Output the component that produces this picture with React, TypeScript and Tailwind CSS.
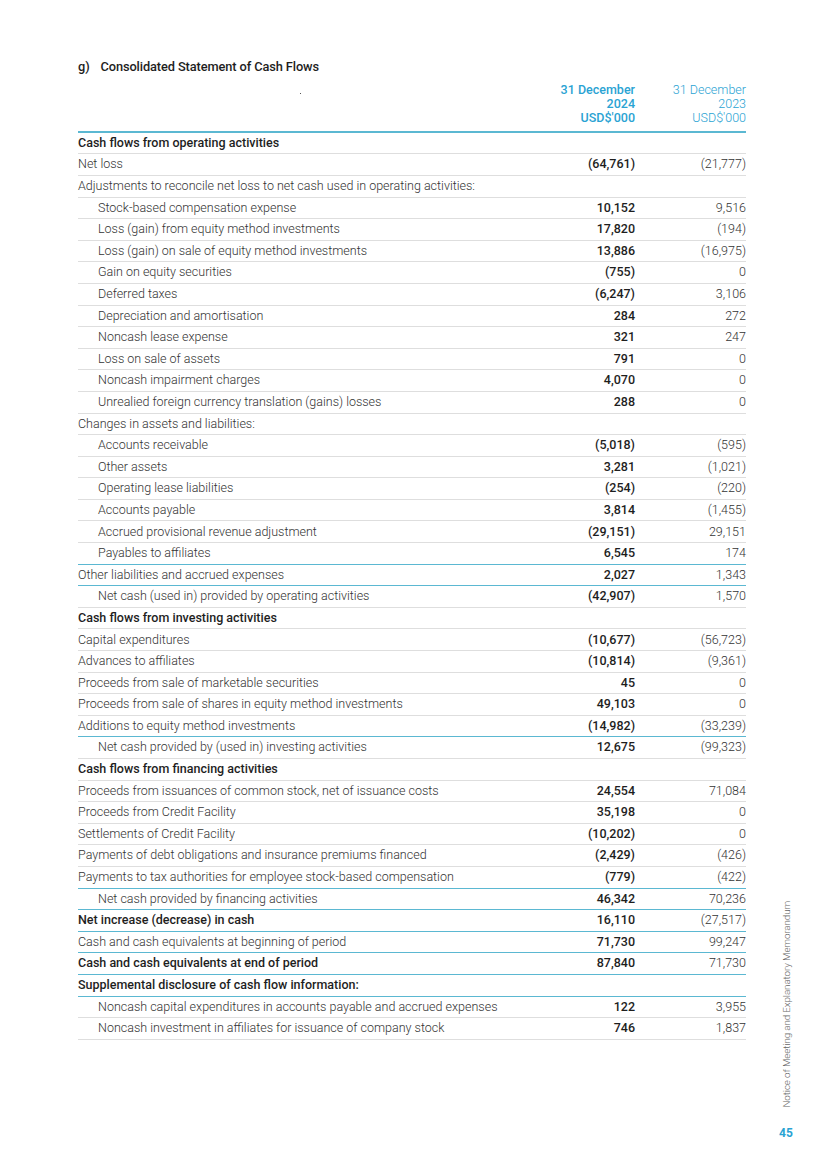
type Row = {
  label: string;
  a?: string;
  b?: string;
  kind?: "head" | "plain" | "indent" | "total";
  line?: "teal" | "gray";
};

const rows: Row[] = [
  { label: "Cash flows from operating activities", kind: "head" },
  { label: "Net loss", a: "(64,761)", b: "(21,777)" },
  { label: "Adjustments to reconcile net loss to net cash used in operating activities:" },
  { label: "Stock-based compensation expense", a: "10,152", b: "9,516", kind: "indent" },
  { label: "Loss (gain) from equity method investments", a: "17,820", b: "(194)", kind: "indent" },
  { label: "Loss (gain) on sale of equity method investments", a: "13,886", b: "(16,975)", kind: "indent" },
  { label: "Gain on equity securities", a: "(755)", b: "0", kind: "indent" },
  { label: "Deferred taxes", a: "(6,247)", b: "3,106", kind: "indent" },
  { label: "Depreciation and amortisation", a: "284", b: "272", kind: "indent" },
  { label: "Noncash lease expense", a: "321", b: "247", kind: "indent" },
  { label: "Loss on sale of assets", a: "791", b: "0", kind: "indent" },
  { label: "Noncash impairment charges", a: "4,070", b: "0", kind: "indent" },
  { label: "Unrealied foreign currency translation (gains) losses", a: "288", b: "0", kind: "indent" },
  { label: "Changes in assets and liabilities:" },
  { label: "Accounts receivable", a: "(5,018)", b: "(595)", kind: "indent" },
  { label: "Other assets", a: "3,281", b: "(1,021)", kind: "indent" },
  { label: "Operating lease liabilities", a: "(254)", b: "(220)", kind: "indent" },
  { label: "Accounts payable", a: "3,814", b: "(1,455)", kind: "indent" },
  { label: "Accrued provisional revenue adjustment", a: "(29,151)", b: "29,151", kind: "indent" },
  { label: "Payables to affiliates", a: "6,545", b: "174", kind: "indent", line: "teal" },
  { label: "Other liabilities and accrued expenses", a: "2,027", b: "1,343", line: "teal" },
  { label: "Net cash (used in) provided by operating activities", a: "(42,907)", b: "1,570", kind: "indent" },
  { label: "Cash flows from investing activities", kind: "head" },
  { label: "Capital expenditures", a: "(10,677)", b: "(56,723)" },
  { label: "Advances to affiliates", a: "(10,814)", b: "(9,361)" },
  { label: "Proceeds from sale of marketable securities", a: "45", b: "0" },
  { label: "Proceeds from sale of shares in equity method investments", a: "49,103", b: "0" },
  { label: "Additions to equity method investments", a: "(14,982)", b: "(33,239)", line: "teal" },
  { label: "Net cash provided by (used in) investing activities", a: "12,675", b: "(99,323)", kind: "indent" },
  { label: "Cash flows from financing activities", kind: "head" },
  { label: "Proceeds from issuances of common stock, net of issuance costs", a: "24,554", b: "71,084" },
  { label: "Proceeds from Credit Facility", a: "35,198", b: "0" },
  { label: "Settlements of Credit Facility", a: "(10,202)", b: "0" },
  { label: "Payments of debt obligations and insurance premiums financed", a: "(2,429)", b: "(426)" },
  { label: "Payments to tax authorities for employee stock-based compensation", a: "(779)", b: "(422)", line: "teal" },
  { label: "Net cash provided by financing activities", a: "46,342", b: "70,236", kind: "indent", line: "teal" },
  { label: "Net increase (decrease) in cash", a: "16,110", b: "(27,517)", kind: "head", line: "teal" },
  { label: "Cash and cash equivalents at beginning of period", a: "71,730", b: "99,247", line: "teal" },
  { label: "Cash and cash equivalents at end of period", a: "87,840", b: "71,730", kind: "head", line: "teal" },
  { label: "Supplemental disclosure of cash flow information:", kind: "head", line: "teal" },
  { label: "Noncash capital expenditures in accounts payable and accrued expenses", a: "122", b: "3,955", kind: "indent" },
  { label: "Noncash investment in affiliates for issuance of company stock", a: "746", b: "1,837", kind: "indent" },
];

const TableRow = ({ row }: { row: Row }) => {
  const border = row.line === "teal" ? "border-[#5bb8d2]" : "border-[#dedede]";
  const labelCls =
    row.kind === "head"
      ? "font-medium text-[#1e1e1e]"
      : row.kind === "indent"
        ? "pl-[20px] font-light text-[#333]"
        : "font-light text-[#333]";
  return (
    <div className={`grid grid-cols-[1fr_100px_111px] h-[21.6px] items-center border-b ${border}`}>
      <span className={labelCls}>{row.label}</span>
      <span className="text-right font-medium text-[#1e1e1e]">{row.a}</span>
      <span className="text-right font-light text-[#333]">{row.b}</span>
    </div>
  );
};

export default function App() {
  return (
    <div
      className="relative w-[825px] h-[1168px] bg-white text-[12.5px] leading-none"
      style={{ fontFamily: "Roboto, 'Liberation Sans', sans-serif" }}
    >
      <div className="ml-[78px] pt-[61px] w-[668px]">
        <div className="flex gap-[11px] text-[12.8px] font-medium text-[#1e1e1e] tracking-[-0.1px]">
          <span>g)</span>
          <span>Consolidated Statement of Cash Flows</span>
        </div>

        <div className="grid grid-cols-[1fr_100px_111px] mt-[9px] pb-[6px] border-b-2 border-[#5bb8d2] leading-[14px] text-[#2aa3d3]">
          <div className="relative">
            <span className="absolute left-[222px] top-[10px] w-[1px] h-[1px] bg-[#555]" />
          </div>
          <div className="text-right font-medium">
            31 December
            <br />
            2024
            <br />
            USD$'000
          </div>
          <div className="text-right font-light">
            31 December
            <br />
            2023
            <br />
            USD$'000
          </div>
        </div>

        <div>
          {rows.map((r, i) => (
            <TableRow key={i} row={r} />
          ))}
        </div>
      </div>

      <div className="absolute left-[780px] top-[898px] w-[14px] h-[212px] flex items-center justify-center">
        <span className="block [writing-mode:vertical-rl] rotate-180 text-[9.8px] leading-none font-light text-[#666] whitespace-nowrap tracking-[-0.1px]">
          Notice of Meeting and Explanatory Memorandum
        </span>
      </div>
      <div className="absolute left-[779px] top-[1127px] text-[12px] font-bold text-[#2aa3d3]">45</div>
    </div>
  );
}
